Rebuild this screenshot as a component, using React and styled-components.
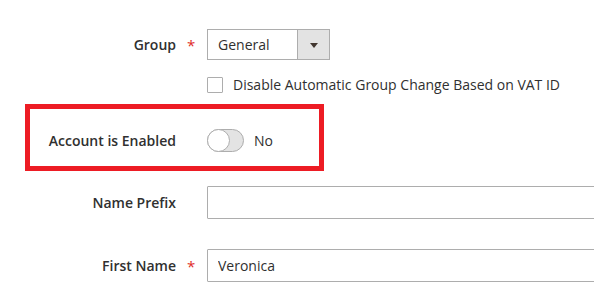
import React from "react";
import styled, { createGlobalStyle } from "styled-components";

const Global = createGlobalStyle`
  html, body { margin: 0; padding: 0; background: #fff; }
  body { font-family: "Open Sans", "Noto Sans", sans-serif; color: #303030; overflow: hidden; }
  * { box-sizing: border-box; }
`;

const Page = styled.div`
  width: 594px;
  height: 300px;
  overflow: hidden;
  padding-top: 29px;
`;

const Row = styled.div`
  position: relative;
  display: grid;
  grid-template-columns: 176px 31px 420px;
  align-items: center;
  margin-top: ${(p) => p.$mt || 0}px;
  height: ${(p) => p.$h || 0}px;
`;

const Label = styled.label`
  grid-column: 1;
  text-align: right;
  font-size: 14px;
  font-weight: 600;
  line-height: 18px;
  color: #303030;
  white-space: nowrap;
`;

const Required = styled.span`
  grid-column: 2;
  padding-left: 11px;
  color: #e02b27;
  font-size: 15px;
  font-weight: 400;
  line-height: 1;
  margin-top: 2px;
`;

const Field = styled.div`
  grid-column: 3;
  display: flex;
  align-items: center;
  line-height: 18px;
`;

const Select = styled.div`
  display: flex;
  width: 123px;
  height: 31px;
  border: 1px solid #adadad;
  background: #fff;
`;

const SelectValue = styled.span`
  flex: 1;
  padding-left: 10px;
  font-size: 14px;
  line-height: 29px;
  color: #303030;
`;

const SelectButton = styled.span`
  width: 32px;
  border-left: 1px solid #adadad;
  background: #e3e3e3;
  display: flex;
  align-items: center;
  justify-content: center;
`;

const Arrow = styled.span`
  width: 0;
  height: 0;
  border-left: 4px solid transparent;
  border-right: 4px solid transparent;
  border-top: 5px solid #41362f;
  margin-top: 1px;
`;

const CheckBox = styled.span`
  width: 16px;
  height: 16px;
  border: 1px solid #adadad;
  border-radius: 1px;
  background: #fff;
  flex-shrink: 0;
`;

const CheckText = styled.span`
  margin-left: 10px;
  font-size: 14px;
  color: #303030;
  white-space: nowrap;
`;

const Highlight = styled.span`
  position: absolute;
  left: 25px;
  top: -25px;
  width: 299px;
  height: 67px;
  border: 5px solid #ed1c24;
  pointer-events: none;
`;

const Toggle = styled.span`
  position: relative;
  width: 37px;
  height: 23px;
  border-radius: 12px;
  border: 1px solid #adadad;
  background: #e3e3e3;
  flex-shrink: 0;
`;

const Knob = styled.span`
  position: absolute;
  left: -1px;
  top: -1px;
  width: 23px;
  height: 23px;
  border-radius: 50%;
  border: 1px solid #adadad;
  background: #fff;
`;

const ToggleText = styled.span`
  margin-left: 10px;
  font-size: 14px;
  color: #303030;
`;

const Input = styled.input`
  width: 420px;
  height: 33px;
  border: 1px solid #adadad;
  border-radius: 1px;
  padding: 0 10px;
  font-family: "Open Sans", "Noto Sans", sans-serif;
  font-size: 14px;
  color: #303030;
  background: #fff;
  outline: none;
`;

export default function App() {
  return (
    <>
      <Global />
      <Page>
        <Row $h={31}>
          <Label>Group</Label>
          <Required>*</Required>
          <Field>
            <Select>
              <SelectValue>General</SelectValue>
              <SelectButton>
                <Arrow />
              </SelectButton>
            </Select>
          </Field>
        </Row>
        <Row $mt={16} $h={16}>
          <Field>
            <CheckBox />
            <CheckText>Disable Automatic Group Change Based on VAT ID</CheckText>
          </Field>
        </Row>
        <Row $mt={37} $h={23}>
          <Highlight />
          <Label>Account is Enabled</Label>
          <Field>
            <Toggle>
              <Knob />
            </Toggle>
            <ToggleText>No</ToggleText>
          </Field>
        </Row>
        <Row $mt={34} $h={33}>
          <Label>Name Prefix</Label>
          <Field>
            <Input defaultValue="" />
          </Field>
        </Row>
        <Row $mt={30} $h={33}>
          <Label>First Name</Label>
          <Required>*</Required>
          <Field>
            <Input defaultValue="Veronica" />
          </Field>
        </Row>
      </Page>
    </>
  );
}
